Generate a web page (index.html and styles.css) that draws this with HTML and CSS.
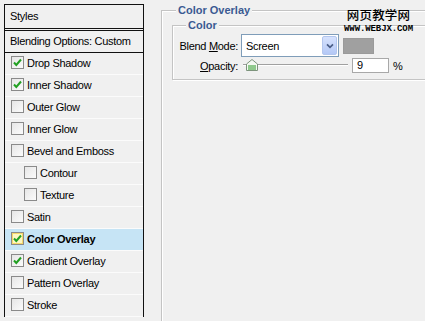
FILE: index.html
```html
<!DOCTYPE html>
<html>
<head>
<meta charset="utf-8">
<link rel="stylesheet" href="styles.css">
</head>
<body>
<div class="page">
  <div class="styles-panel">
    <div class="hdr">Styles</div>
    <div class="row blend">Blending Options: Custom</div>
    <div class="row"><span class="cb on"><svg viewBox="0 0 11 11"><path d="M2 5.5 L4.3 8 L9 2.5"/></svg></span>Drop Shadow</div>
    <div class="row"><span class="cb on"><svg viewBox="0 0 11 11"><path d="M2 5.5 L4.3 8 L9 2.5"/></svg></span>Inner Shadow</div>
    <div class="row"><span class="cb"></span>Outer Glow</div>
    <div class="row"><span class="cb"></span>Inner Glow</div>
    <div class="row"><span class="cb"></span>Bevel and Emboss</div>
    <div class="row sub"><span class="cb"></span>Contour</div>
    <div class="row sub"><span class="cb"></span>Texture</div>
    <div class="row"><span class="cb"></span>Satin</div>
    <div class="row sel"><span class="cb on hot"><svg viewBox="0 0 11 11"><path d="M2 5.5 L4.3 8 L9 2.5"/></svg></span>Color Overlay</div>
    <div class="row"><span class="cb on"><svg viewBox="0 0 11 11"><path d="M2 5.5 L4.3 8 L9 2.5"/></svg></span>Gradient Overlay</div>
    <div class="row"><span class="cb"></span>Pattern Overlay</div>
    <div class="row"><span class="cb"></span>Stroke</div>
  </div>
  <div class="main">
    <fieldset class="grp outer">
      <legend>Color Overlay</legend>
      <fieldset class="grp inner">
        <legend>Color</legend>
        <div class="form">
          <label class="lbl">Blend <u>M</u>ode:</label>
          <div class="ctrl">
            <div class="select"><span>Screen</span><span class="btn"><svg viewBox="0 0 9 7"><path d="M1 1.5 L4.5 5 L8 1.5"/></svg></span></div>
            <div class="swatch"></div>
          </div>
          <label class="lbl"><u>O</u>pacity:</label>
          <div class="ctrl">
            <div class="slider">
              <div class="track"></div>
              <svg class="thumb" viewBox="0 0 12 12"><path d="M6 0.5 L11.5 5 V11.5 H0.5 V5 Z" fill="#f4f8f2" stroke="#7d947c"/><rect x="2" y="6" width="8" height="5" fill="#8fc98c"/></svg>
            </div>
            <div class="num">9</div>
            <span class="pct">%</span>
          </div>
        </div>
      </fieldset>
    </fieldset>
  </div>
  <div class="watermark">
    <div class="wm-cn">网页教学网</div>
    <div class="wm-en">WWW.WEBJX.COM</div>
  </div>
</div>
</body>
</html>
```

FILE: styles.css
```css
html, body {
  margin: 0;
  padding: 0;
}
body {
  width: 425px;
  height: 321px;
  overflow: hidden;
  background: #f0f0f0;
  font: 11px "Liberation Sans", Arial, sans-serif;
  letter-spacing: -0.3px;
  color: #000;
}
.page {
  position: relative;
  display: flex;
  align-items: flex-start;
  padding: 4px 0 0 4px;
  height: 321px;
  box-sizing: border-box;
}
.styles-panel {
  flex: none;
  width: 138px;
  border: 1px solid #111;
  border-bottom: none;
  background: #f0f0f0;
}
.hdr {
  height: 22px;
  line-height: 22px;
  padding: 0 0 1px 5px;
  border-bottom: 3px double #111;
}
.row {
  height: 19px;
  padding-bottom: 2px;
  display: flex;
  align-items: center;
  gap: 3px;
  padding-left: 6px;
  border-bottom: 1px solid #fbfbfb;
  white-space: nowrap;
}
.row.blend {
  padding-left: 5px;
  border-bottom: 1px solid #111;
}
.row.sub {
  padding-left: 19px;
}
.row.sel {
  background: #c6e4f5;
  font-weight: bold;
}
.cb {
  width: 11px;
  height: 11px;
  border: 1px solid #8a8a8a;
  background: linear-gradient(135deg, #e6e6e6, #fbfbfb);
  display: inline-flex;
  flex: none;
}
.cb svg {
  width: 11px;
  height: 11px;
}
.cb svg path {
  fill: none;
  stroke: #22a022;
  stroke-width: 2;
}
.cb.hot {
  background: #fdf7c4;
  box-shadow: inset 0 0 0 1px #f5d76a;
}
.main {
  flex: 1;
  margin-left: 17px;
  height: 317px;
  overflow: hidden;
}
.grp {
  margin: 0;
  border: 1px solid #c4c4c4;
  box-shadow: inset 1px 1px 0 #fff, 1px 1px 0 #fff;
}
.grp legend {
  font-weight: bold;
  color: #3a5a92;
  line-height: 13px;
  padding: 0 2px;
  letter-spacing: 0;
  background: #f0f0f0;
}
.outer {
  width: 400px;
  height: 400px;
  padding: 0 0 0 10px;
}
.outer > legend {
  margin-left: 4px;
}
.inner {
  margin-top: 2px;
  padding: 2px 0 6px 0;
}
.inner > legend {
  margin-left: 13px;
}
.form {
  display: grid;
  grid-template-columns: 65px auto;
  column-gap: 3px;
  row-gap: 1px;
  align-items: center;
}
.lbl {
  text-align: right;
  white-space: nowrap;
}
.ctrl {
  display: flex;
  align-items: center;
}
.select {
  width: 98px;
  height: 23px;
  box-sizing: border-box;
  border: 1px solid #7f9db9;
  background: #fff;
  display: flex;
  align-items: center;
  justify-content: space-between;
  padding-left: 4px;
}
.btn {
  width: 15px;
  height: 19px;
  margin-right: 1px;
  box-sizing: border-box;
  border: 1px solid #b3c6ee;
  border-radius: 2px;
  background: linear-gradient(#d6e2fd, #b4c8f6);
  display: flex;
  align-items: center;
  justify-content: center;
}
.btn svg {
  width: 8px;
  height: 6px;
}
.btn svg path {
  fill: none;
  stroke: #4a5d86;
  stroke-width: 2;
}
.swatch {
  width: 29px;
  height: 14px;
  margin-left: 4px;
  background: #a0a0a0;
  border: 1px solid #9a9a9a;
}
.slider {
  position: relative;
  width: 107px;
  height: 15px;
}
.track {
  margin: 6px 0 0 2px;
  border-top: 1px solid #a0a0a0;
  border-bottom: 1px solid #fff;
}
.thumb {
  position: absolute;
  left: 5px;
  top: 1px;
  width: 12px;
  height: 12px;
}
.num {
  width: 35px;
  height: 13px;
  margin-left: 4px;
  border: 1px solid #a8a8a8;
  background: #fff;
  line-height: 13px;
  text-indent: 4px;
}
.pct {
  margin-left: 4px;
}
.watermark {
  position: absolute;
  left: 342px;
  top: 8px;
  width: 73px;
  text-align: center;
  letter-spacing: 0;
}
.wm-cn {
  font: 500 12.5px/14px "Noto Sans CJK SC", sans-serif;
  letter-spacing: 0.2px;
}
.wm-en {
  margin-top: 3px;
  font: bold 9px/9px "Liberation Mono", monospace;
  letter-spacing: -0.1px;
}
```
